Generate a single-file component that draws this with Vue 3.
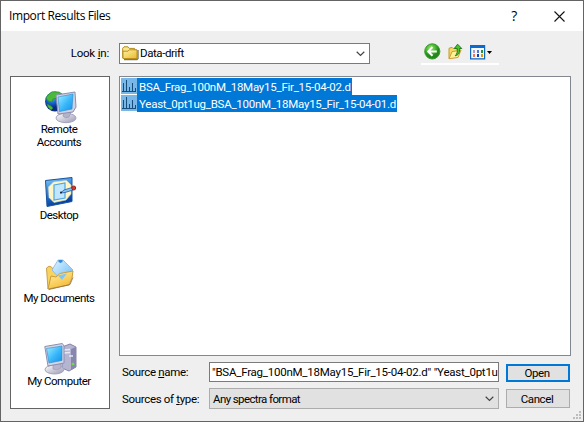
<script setup>
const files = ['BSA_Frag_100nM_18May15_Fir_15-04-02.d', 'Yeast_0pt1ug_BSA_100nM_18May15_Fir_15-04-01.d']
</script>

<template>
  <div class="window">
    <header class="titlebar">
      <span class="title">Import Results Files</span>
      <span class="help">?</span>
      <svg class="close" width="11" height="11" viewBox="0 0 11 11"><path d="M.5.5l10 10M10.5.5l-10 10" stroke="#111" stroke-width="1.1" /></svg>
    </header>
    <main class="content">
      <div class="look"><span class="t-look">Look <u>i</u>n:</span></div>
      <div class="top">
        <div class="combo path">
          <svg class="folder" width="17" height="15" viewBox="0 0 17 15">
            <path d="M2 13.5h13l1-1V4" fill="none" stroke="#777" stroke-width="1.4" />
            <path d="M.7 12V2.2L2 .8h4l1.3 1.6h5.2V4h2v8.3z" fill="#fbe68c" stroke="#b08b20" />
            <path d="M1 12.5V5.2h5l1.3-1.4H15v8.7z" fill="url(#fold)" stroke="#b8901c" />
            <defs><linearGradient id="fold" x2="1" y2="1"><stop stop-color="#fff3a5" /><stop offset="1" stop-color="#e9b82d" /></linearGradient></defs>
          </svg>
          <span class="t-path">Data-drift</span>
          <svg class="chev" width="9" height="6" viewBox="0 0 9 6"><path d="M.7.8l3.8 3.7L8.3.8" fill="none" stroke="#444" stroke-width="1.2" /></svg>
        </div>
        <div class="tools">
          <svg class="back" width="17" height="17" viewBox="0 0 17 17">
            <defs><radialGradient id="green" cx=".4" cy=".3"><stop stop-color="#9ae37c" /><stop offset=".65" stop-color="#46b52c" /><stop offset="1" stop-color="#24881b" /></radialGradient></defs>
            <circle cx="8.3" cy="8.4" r="7.6" fill="url(#green)" stroke="#3a9a2a" />
            <path d="M8.5 4L4.2 8.4l4.3 4.4M4.8 8.4h8" fill="none" stroke="#fff" stroke-width="2" />
          </svg>
          <svg class="up" width="15" height="17" viewBox="0 0 15 17">
            <path d="M1 15.5V5.3l3-1 1.2 1.2 4-1v7z" fill="#f8d764" stroke="#c69a2a" />
            <path d="M1 15.7l3-7 9-1.7-3 7.5z" fill="#fff09a" stroke="#caa034" />
            <path d="M7.2 12.8c2-2 2.4-4.500 2-7.300H6.300L9.600 1.200l4.200 4.300h-2.300c.6 4-.8 6.500-4.300 7.300z" fill="#4cc42f" stroke="#16771a" stroke-width=".9" />
          </svg>
          <svg class="views" width="23" height="15" viewBox="0 0 23 15">
            <path d="M.6.6h14v13.300H.6z" fill="#f4f9ff" stroke="#1266bd" stroke-width="1.200" />
            <path d="M0 0h15v3H0z" fill="#0b69cf" />
            <path d="M3 5h2v3H3z" fill="#a79bd0" /><path d="M7 5h2v3H7z" fill="#5874d4" /><path d="M11 5h2v3h-2z" fill="#269438" />
            <path d="M3 9h2v3H3z" fill="#ef7858" /><path d="M7 9h2v3H7z" fill="#183fb2" /><path d="M11 9h2v3h-2z" fill="#d99b13" />
            <path d="M17 6h5l-2.500 3z" />
          </svg>
        </div>
      </div>

      <aside class="places">
        <div class="place remote">
          <svg width="34" height="34" viewBox="0 0 34 34">
            <defs>
              <radialGradient id="globe" cx=".35" cy=".3"><stop stop-color="#65b9ff" /><stop offset=".55" stop-color="#1766cf" /><stop offset="1" stop-color="#0a2c86" /></radialGradient>
              <linearGradient id="screen" x2="1" y2="1"><stop stop-color="#a3efff" /><stop offset=".55" stop-color="#39b7fb" /><stop offset="1" stop-color="#168fea" /></linearGradient>
              <linearGradient id="base" x2="1" y2="1"><stop stop-color="#fff" /><stop offset="1" stop-color="#9a98b5" /></linearGradient>
            </defs>
            <circle cx="11" cy="11.500" r="10" fill="url(#globe)" />
            <path d="M8 1.800l7 .2 3 2-3 1-2 3-4 1-1 3-4-1-2-3 2-3zM3 14l4 2 2 2-2 2-3-3z" fill="#4cba38" stroke="#238c31" stroke-width=".7" />
            <ellipse cx="22" cy="28" rx="10" ry="4.700" fill="url(#base)" stroke="#a5a3bd" />
            <path d="M20 22h7l-2 5q-4 2-6-1z" fill="#b4b3cc" stroke="#9897b0" stroke-width=".7" />
            <path d="M12 5l19-3 1 15L29 22l-15 2z" fill="#cfd0e1" stroke="#8c8fb2" />
            <path d="M14 7l15-3-1 15-12.500 2.500z" fill="url(#screen)" stroke="#298bc9" stroke-width=".6" />
          </svg>
          <span>Remote</span><span>Accounts</span>
        </div>
        <div class="place desktop">
          <svg width="34" height="34" viewBox="0 0 34 34">
            <defs><linearGradient id="desk" x2=".3" y2="1"><stop stop-color="#83c9fa" /><stop offset=".6" stop-color="#2374cf" /><stop offset="1" stop-color="#063c9b" /></linearGradient></defs>
            <path d="M1.500 4.500L28 1.500v24L3 30.500z" fill="url(#desk)" stroke="#17549f" />
            <path d="M4.500 11l5-5 13-1.500L27 9v9l-5 6-12 2.500-5-5z" fill="#fff6c5" stroke="#d7dcc6" stroke-width=".6" />
            <path d="M10 9l11-2v15l-11 2z" fill="#c2e6ff" stroke="#4ca6e3" stroke-width="1.200" />
            <path d="M16.500 17l3.500-3 8-2.500 1 2.500-8 2.500z" fill="#83c6f3" stroke="#245a9f" stroke-width=".8" />
            <circle cx="29.700" cy="12" r="2" fill="#d83b29" stroke="#96251c" /><circle cx="17" cy="16.500" r="1" fill="#123" />
          </svg>
          <span>Desktop</span>
        </div>
        <div class="place docs">
          <svg width="34" height="34" viewBox="0 0 34 34">
            <defs><linearGradient id="paper" x2="1" y2="1"><stop stop-color="#e1f6ff" /><stop offset="1" stop-color="#62b5f4" /></linearGradient><linearGradient id="gold" x2=".6" y2="1"><stop stop-color="#fff6aa" /><stop offset="1" stop-color="#f6b833" /></linearGradient></defs>
            <path d="M4 31L2.500 10q2.500-3 5-1l2 3 12 2 1 13z" fill="#f9d35f" stroke="#caa04a" />
            <path d="M8 12L14 2h5l10 10-10 12z" fill="url(#paper)" stroke="#86b6dc" stroke-width=".8" />
            <path d="M14.500 2h4v2l-2 1-2-1z" fill="#3488dd" />
            <path d="M4 31l3-13 5 1 4-3.500 13-2.500-1 7-3 7z" fill="url(#gold)" stroke="#c99c3b" />
            <path d="M14 17.500l9-2-5 6.500z" fill="#80c6f6" /><path d="M5 31.500l21-5 3-7" fill="none" stroke="#8c7546" stroke-width=".8" />
          </svg>
          <span>My Documents</span>
        </div>
        <div class="place computer">
          <svg width="34" height="34" viewBox="0 0 34 34">
            <path d="M18 5l8-3 6 3v20l-7 4-7-3z" fill="#b5b5d2" stroke="#8685ab" />
            <path d="M27 7l5-2v20l-5 3z" fill="#8786ae" /><path d="M20 8l6-.5M20 11l6-.5M25 14h4" stroke="#e8e8f5" stroke-width="1.300" />
            <circle cx="29" cy="22" r="1.500" fill="#72db3b" />
            <ellipse cx="10.500" cy="27.500" rx="9.500" ry="4.500" fill="url(#base)" stroke="#a5a3bd" />
            <path d="M9 22h8v4q-4 3-8 1z" fill="#b7b5cd" stroke="#9a96b4" stroke-width=".6" />
            <path d="M.8 4.500l17.500-3L20 4v17l-16 3z" fill="#d6d7e5" stroke="#8c8eb2" />
            <path d="M2.500 6.500L18 4v14.500L5 21z" fill="url(#screen)" stroke="#318ac4" stroke-width=".6" />
          </svg>
          <span>My Computer</span>
        </div>
      </aside>

      <section class="files">
        <div v-for="(file, i) in files" :key="file" class="file">
          <svg width="16" height="16" viewBox="0 0 16 16"><path d="M0 0h16v16H0z" fill="#79b7e9" /><path d="M1 13.500h14M2.500 5v8.500M5.500 2v11.500M8.500 9v4.500M11.500 5v8.500M14.500 10v3.500" stroke="#174d78" /></svg>
          <span :class="['name', 'name-' + i]"><span>{{ file }}</span></span>
        </div>
      </section>

      <form class="form">
        <label>Source <u>n</u>ame:</label>
        <div class="source"><div class="clip"><span>"BSA_Frag_100nM_18May15_Fir_15-04-02.d" "Yeast_0pt1u</span></div></div>
        <button type="button" class="open"><span>Open</span></button>
        <label>Sources of <u>t</u>ype:</label>
        <div class="combo type"><span class="t-any">Any spectra format</span><svg class="chev" width="9" height="6" viewBox="0 0 9 6"><path d="M.7.8l3.8 3.700L8.300.8" fill="none" stroke="#444" stroke-width="1.200" /></svg></div>
        <button type="button" class="cancel"><span>Cancel</span></button>
      </form>
    </main>
    <svg class="grip" width="8" height="8" viewBox="0 0 8 8"><path d="M6 0h2v2H6zM3 3h2v2H3zM6 3h2v2H6zM0 6h2v2H0zM3 6h2v2H3zM6 6h2v2H6z" fill="#bdbdbd" /></svg>
  </div>
</template>

<style>
body { margin: 0; overflow: hidden; }
</style>
<style scoped>
* { box-sizing: border-box; }
svg { display: block; flex: none; }
.window { position: relative; width: 584px; height: 422px; border: 1px solid #646464; background: #efefef; font: 11.5px/14px Roboto, "Liberation Sans", sans-serif; letter-spacing: -.2px; color: #000; white-space: nowrap; }
.titlebar { height: 30px; background: #fff; display: flex; align-items: center; padding: 0 18px 0 8px; }
.title { font: 12px/16px "Open Sans", sans-serif; letter-spacing: -.4px; }
.help { margin-left: auto; font: 14px/16px "Open Sans", sans-serif; }
.close { margin-left: 37px; }
.content { display: grid; grid-template-columns: 100px 452px; grid-template-rows: 45px 280px 53px; column-gap: 9px; padding-left: 9px; }
.look { padding: 15px 1px 0 0; text-align: right; }
u { text-decoration: underline; text-underline-offset: 1px; text-decoration-thickness: 1px; }
.top { display: flex; padding-top: 12px; }
.combo { height: 21px; display: flex; align-items: center; border: 1px solid #7a7a7a; background: #fff; }
.path { width: 251px; padding: 0 4px 0 2px; }
.t-path { margin-left: 1px; padding-bottom: 2px; letter-spacing: -.4px; }
.chev { margin-left: auto; }
.tools { width: 78px; height: 22px; margin-left: 51px; display: flex; align-items: flex-start; border-bottom: 2px solid #fff; padding-left: 3px; }
.up { margin-left: 7px; }
.views { margin: 2px 0 0 7px; }
.places { grid-row: 2 / 4; height: 333px; background: #fff; border: 1px solid #646464; padding: 14px 2px 0 0; display: grid; grid-template-rows: 85px 82px 84px 50px; letter-spacing: -.5px; }
.place { display: flex; flex-direction: column; align-items: center; line-height: 13px; }
.place svg { margin-left: 3px; }
.remote svg { margin-bottom: -1px; margin-top: -1px; }
.desktop svg, .computer svg { margin-bottom: -1px; }
.files { background: #fff; border: 1px solid #828790; padding: 1px; }
.file { height: 17px; display: flex; }
.name { height: 17px; background: #0078d7; color: #fff; padding: 2px; letter-spacing: -.25px; }
.name-0 { width: 215px; }
.name-1 { width: 260px; }
.form { display: grid; grid-template-columns: 90px 290px 64px; grid-template-rows: 20px 21px; row-gap: 6px; padding-top: 6px; align-items: center; }
.form label { padding-left: 3px; letter-spacing: -.33px; }
.source { height: 20px; border: 1px solid #7a7a7a; background: #fff; padding: 2px; }
.clip { overflow: hidden; width: 286px; letter-spacing: -.24px; }
.t-any { letter-spacing: -.6px; }
.type { background: #e1e1e1; border-color: #acacac; padding: 0 4px 0 3px; }
button { margin: 0 0 0 7px; width: 64px; padding: 0; font: inherit; letter-spacing: -.4px; color: #000; background: #e1e1e1; }
.open { height: 18px; border: 2px solid #0078d7; line-height: 14px; margin-top: 1px; padding-right: 2px; }
.cancel { height: 19px; border: 1px solid #acacac; padding-right: 2px; }
.grip { position: absolute; right: 2px; bottom: 2px; }
</style>
